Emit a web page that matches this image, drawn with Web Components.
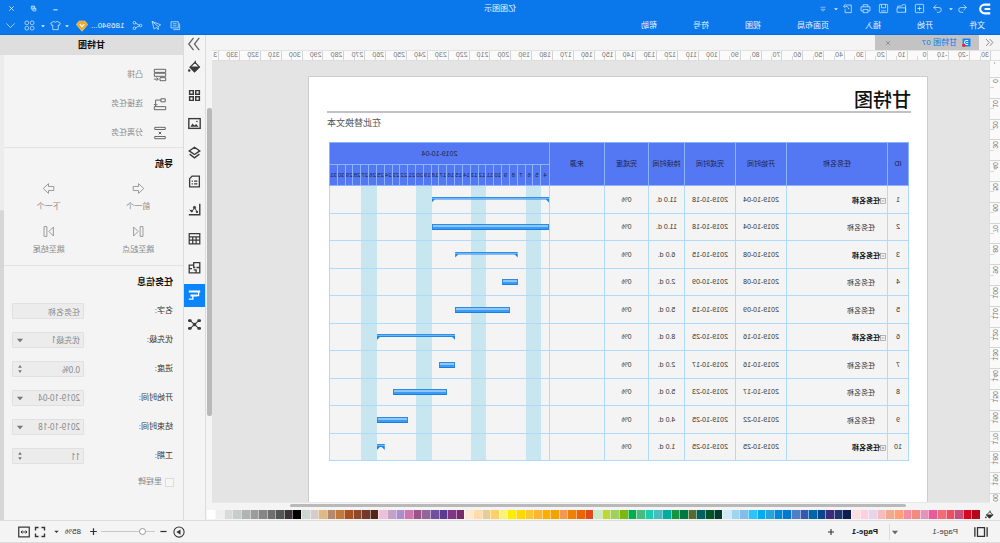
<!DOCTYPE html>
<html lang="zh-CN">
<head>
<meta charset="utf-8">
<title>亿图图示</title>
<style>
  html, body { margin: 0; height: 100%; overflow: hidden; background: #f4f4f4; }
  body { font: 8px/12px "Liberation Sans", "Noto Sans CJK SC", sans-serif; color: #333; }
</style>
</head>
<body>
<gantt-app></gantt-app>
<script>
const RESET = `
  *, *::before, *::after { box-sizing: border-box; }
  button { all: unset; box-sizing: border-box; display: inline-flex; align-items: center; justify-content: center; cursor: pointer; }
  a { color: inherit; text-decoration: none; }
  ui-icon { flex: none; }
`;

function component(name, css, html, setup) {
  customElements.define(name, class extends HTMLElement {
    connectedCallback() {
      if (this.shadowRoot) return;
      const root = this.attachShadow({ mode: 'open' });
      const body = typeof html === 'function' ? html(this) : html;
      root.innerHTML = `<style>${RESET}${css}</style>${body}`;
      if (setup) setup(this, root);
    }
  });
}

/* ---------- icons (16 x 16 grid, stroked with the current colour) ---------- */
const ICONS = {
  logo: '<path d="M2 3h6.500a5 5 0 0 1 0 10H2M2 8h6.500" stroke-width="2.400"/>',
  undo: '<path d="M6.500 2.500 2.500 6.500l4 4M2.500 6.500H10a3.500 3.500 0 0 1 0 7H7"/>',
  redo: '<path d="M9.500 2.500l4 4-4 4M13.500 6.500H6a3.500 3.500 0 0 0 0 7h3"/>',
  add: '<rect x="2" y="2" width="12" height="12" rx="1"/><path d="M8 5v6M5 8h6"/>',
  open: '<path d="M2 13.500V3.500q0-1 1-1h3.500l1.500 2h5.500V7M2 13.500V7H14.500v6.500z"/>',
  save: '<rect x="2" y="2" width="12" height="12" rx="1"/><path d="M5 2v5h6V2M4.500 11.500h7"/>',
  print: '<path d="M4.500 5.500V2.500h7v3M4.500 11.500h-3v-6h13v6h-3M4.500 9.500h7v4.500h-7z"/>',
  export: '<path d="M10 3H2.500v11h9V9M6 9c.500-3 3-4.500 7-4.500M10.500 1.500l3.500 3-3 3"/>',
  caret: '<path d="M3 6h10L8 11.500z" fill="currentColor" stroke="none"/>',
  more: '<path d="M3 4.500h10M4 8.500h8L8 12.500z"/>',
  min: '<path d="M3 11h10" stroke-width="2.200"/>',
  restore: '<path d="M2.500 7.500h7v6h-7zM5.500 7V2.500h7.500v7H10M2.500 9h7M5.500 4.500H13" stroke-width="1.500"/>',
  close: '<path d="M3 3l10 10M13 3 3 13" stroke-width="1.800"/>',
  notes: '<path d="M2 5v9h9M4 2.500h10.500v9H4zM6.500 5.500H12M6.500 8.500H12"/>',
  send: '<path d="M14.500 2 2 7l3.500 2.500V14l2.500-3 3.500 2zM14 2.500l-8.500 7"/>',
  share: '<circle cx="12.500" cy="4" r="1.900"/><circle cx="3.500" cy="8" r="1.900"/><circle cx="12.500" cy="12" r="1.900"/><path d="M5 7.500 11 4.500M5 8.500l6 3"/>',
  gem: '<path d="M4 1.500h8l3.500 4.500L8 15 .500 6z" fill="#f5a623" stroke="#ffcf70"/><path d="M5 5.500l3 3.500 3-3.500" stroke="#fff" stroke-width="1.800"/>',
  shirt: '<path d="M5.500 2 1 4.500 2.500 8 4 7.300V14h8V7.300L13.500 8 15 4.500 10.500 2Q8 4.500 5.500 2z"/>',
  apps: '<rect x="1.500" y="1.500" width="5.200" height="5.200" rx="2"/><rect x="9.300" y="1.500" width="5.200" height="5.200" rx="2"/><rect x="1.500" y="9.300" width="5.200" height="5.200" rx="2"/><rect x="9.300" y="9.300" width="5.200" height="5.200" rx="2"/>',
  down: '<path d="M2 5l6 6 6-6"/>',
  dleft: '<path d="M7.500 2 2 8l5.500 6M14 2 8.500 8l5.500 6" stroke-width="1.500"/>',
  dright: '<path d="M2 1l5.500 7L2 15M8.500 1 14 8l-5.500 7" stroke-width="1.500"/>',
  doc: '<rect x="1" y="1" width="14" height="14" fill="#0a84ff" stroke="none"/><path d="M5 4.500h3a3.500 3.500 0 0 1 0 7H5M5 8h3.500" stroke="#fff" stroke-width="1.800"/><circle cx="13" cy="13" r="3" fill="#f22" stroke="none"/>',
  fill: '<path d="M7 1v4M2 8.500 7.500 3l6 6L8 14.500z" stroke-width="1.500"/><path d="M2 8.500h11.500L8 14.500z" fill="currentColor"/><circle cx="14.500" cy="13" r="1.500" fill="currentColor" stroke="none"/>',
  blocks: '<path d="M2 2h4.500v4.500H2zM9.500 2H14v4.500H9.500zM2 9.500h4.500V14H2zM9.500 9.500H14V14H9.500z" stroke-width="1.800"/>',
  image: '<rect x="1" y="2" width="14" height="12" stroke-width="1.700"/><path d="M3 12l3-3.500 2 2 2.500-2.500L13 12z" fill="currentColor" stroke="none"/><circle cx="5" cy="5.500" r="1" fill="currentColor" stroke="none"/>',
  layers: '<path d="M8 1.500 1.500 6 8 10.500 14.500 6zM2 10l6 4.500 6-4.500" stroke-width="1.700"/>',
  page: '<path d="M2 1.500h9l3 3v10H2zM4.500 7.500h4M10 7.500h1.500M4.500 11h4M10 11h1.500" stroke-width="1.600"/>',
  chart: '<path d="M1.500 1v13.500H15" stroke-width="1.700"/><path d="M4.500 11.500 8 5.500l3 5 3-2" stroke-width="1.200"/><circle cx="8" cy="5.500" r="1.400" fill="currentColor"/><circle cx="5" cy="11" r="1" fill="currentColor"/><circle cx="11.500" cy="10" r="1" fill="currentColor"/>',
  table: '<path d="M1.500 2h13v12.500h-13zM1.500 6h13M1.500 10h13M6 6v8.500M10.200 6v8.500" stroke-width="1.500"/>',
  plan: '<path d="M1.500 2H9v3h5.500v9.500h-13zM1.500 8h4M9 5v3H7M6 14v-3h3M11 9.500h3.500" stroke-width="1.600"/>',
  gantt: '<path d="M1 3h14M5 8h8" stroke-width="2.400"/><path d="M3 3v5h3M10 8.500v4h5" stroke-width="1.600"/>',
  network: '<path d="M3 3.500 13 12.500M13 3.500 3 12.500" stroke-width="1.300"/><g fill="currentColor" stroke="none"><rect x="6" y="6" width="4" height="4"/><rect x="0" y="1.500" width="4.500" height="3.500" rx="1.500"/><rect x="11.500" y="1.500" width="4.500" height="3.500" rx="1.500"/><rect x="0" y="11" width="4.500" height="3.500" rx="1.500"/><rect x="11.500" y="11" width="4.500" height="3.500" rx="1.500"/></g>',
  outdent: '<path d="M1.500 1.500h13v3.500h-13zM1.500 6h13v3.500h-13zM1.500 11h6.500v3.500H1.500z"/><path d="M15 12.700h-5M12 10.700l-2 2 2 2"/>',
  link: '<path d="M2 2h5v3.500H2zM1.500 11h13v3.500h-13zM7 3.500h6V10M11 8l2 2 2-2"/>',
  split: '<path d="M2 1.500h12V4H2zM2 12h12v2.500H2zM6.500 6.500l3 3M9.500 6.500l-3 3"/>',
  prev: '<path d="M1.500 8 8 2v3.500h6.500v5H8V14z"/>',
  next: '<path d="M14.500 8 8 2v3.500H1.500v5H8V14z"/>',
  first: '<path d="M2.500 2H6v12H2.500zM14 2.500v11L8.500 8z"/>',
  last: '<path d="M13.500 2H10v12h3.500zM2 2.500v11L7.500 8z"/>',
  spin: '<path d="M5 6 8 1.500 11 6zM5 10 8 14.500 11 10z" fill="currentColor" stroke="none"/>',
  pages: '<path d="M4 3h8v10H4zM1 2.500v11M15 2.500v11" stroke-width="1.500"/>',
  play: '<circle cx="8" cy="8" r="6.800" stroke-width="1.400"/><path d="M6 4.500 11.500 8 6 11.500z" fill="currentColor" stroke="none"/>',
  minus: '<path d="M2.500 8h11" stroke-width="2.200"/>',
  plus: '<path d="M8 2v12M2 8h12" stroke-width="2.200"/>',
  full: '<path d="M2 6V2h4M10 2h4v4M14 10v4h-4M6 14H2v-4" stroke-width="1.800"/>',
  fit: '<rect x="1" y="1.500" width="14" height="13" stroke-width="1.600"/><path d="M4 8h8M6 6 4 8l2 2M10 6l2 2-2 2" stroke-width="1.300"/>',
  collapse: '<rect x="1.500" y="1.500" width="13" height="13" stroke-width="1.600"/><path d="M4.500 8h7" stroke-width="1.800"/>',
  expand: '<rect x="1.500" y="1.500" width="13" height="13" stroke-width="1.600"/><path d="M4.500 8h7M8 4.500v7" stroke-width="1.800"/>'
};
component('ui-icon', `
  :host { display: inline-block; width: var(--s, 10px); height: var(--s, 10px); }
  svg { display: block; width: 100%; height: 100%; fill: none; stroke: currentColor; }
`, el => `<svg viewBox="0 0 16 16" aria-hidden="true">${ICONS[el.getAttribute('name')]}</svg>`);

/* ---------- title bar and menus ---------- */
component('app-header', `
  :host { display: block; height: 35px; background: #0a78eb; border-bottom: 1px solid #0a6ad4; color: #eaf4ff; }
  .bar { display: grid; grid-template-columns: 1fr auto 1fr; align-items: center; height: 17px; }
  .quick { display: flex; align-items: center; padding-left: 6px; --s: 11px; }
  .quick button { width: 18px; height: 16px; }
  .quick button.slim { width: 10px; --s: 6px; margin: 0 -3px 0 -2px; }
  .quick .logo { --s: 14px; color: #fff; margin-right: 4px; }
  .quick button.menu { --s: 8px; width: 12px; margin-left: 5px; }
  .quick .after { margin-left: 2px; }
  .win { display: flex; justify-content: flex-end; padding-right: 1px; --s: 7px; }
  .win button { width: 22px; height: 16px; }
  .row { display: flex; justify-content: space-between; align-items: center; height: 17px; }
  nav { display: flex; gap: 36px; padding-left: 15px; }
  .user { display: flex; align-items: center; padding-right: 1px; --s: 11px; }
  .user button { width: 19px; height: 16px; }
  .user button.slim { width: 9px; --s: 6px; }
  .user button.shirt { width: 15px; }
  .user .gem { margin-right: 3px; }
  .name { margin: 0 2px 0 4px; }
  .user button.gem { width: 14px; --s: 12px; }
`, `
  <div class="bar">
    <div class="quick">
      <button class="logo" aria-label="首页"><ui-icon name="logo"></ui-icon></button>
      <button aria-label="撤销"><ui-icon name="undo"></ui-icon></button>
      <button class="slim" aria-label="撤销列表"><ui-icon name="caret"></ui-icon></button>
      <button class="after" aria-label="重做"><ui-icon name="redo"></ui-icon></button>
      <button aria-label="新建"><ui-icon name="add"></ui-icon></button>
      <button aria-label="打开"><ui-icon name="open"></ui-icon></button>
      <button aria-label="保存"><ui-icon name="save"></ui-icon></button>
      <button aria-label="打印"><ui-icon name="print"></ui-icon></button>
      <button aria-label="导出"><ui-icon name="export"></ui-icon></button>
      <button class="slim" aria-label="导出列表"><ui-icon name="caret"></ui-icon></button>
      <button class="menu" aria-label="更多"><ui-icon name="more"></ui-icon></button>
    </div>
    <div>亿图图示</div>
    <div class="win">
      <button aria-label="最小化"><ui-icon name="min"></ui-icon></button>
      <button aria-label="还原"><ui-icon name="restore"></ui-icon></button>
      <button aria-label="关闭"><ui-icon name="close"></ui-icon></button>
    </div>
  </div>
  <div class="row">
    <nav><a href="#file">文件</a><a href="#home">开始</a><a href="#insert">插入</a><a href="#layout">页面布局</a><a href="#view">视图</a><a href="#symbol">符号</a><a href="#help">帮助</a></nav>
    <div class="user">
      <button aria-label="评论"><ui-icon name="notes"></ui-icon></button>
      <button aria-label="发送"><ui-icon name="send"></ui-icon></button>
      <button aria-label="分享"><ui-icon name="share"></ui-icon></button>
      <span class="name">186940...</span>
      <button class="gem" aria-label="会员"><ui-icon name="gem"></ui-icon></button>
      <button class="slim" aria-label="会员列表"><ui-icon name="caret"></ui-icon></button>
      <button class="shirt" aria-label="主题"><ui-icon name="shirt"></ui-icon></button>
      <button class="slim" aria-label="主题列表"><ui-icon name="caret"></ui-icon></button>
      <button aria-label="应用"><ui-icon name="apps"></ui-icon></button>
      <button aria-label="收起"><ui-icon name="down"></ui-icon></button>
    </div>
  </div>
`);

component('doc-tabs', `
  :host { display: flex; height: 15px; background: #f4f4f4; color: #777; }
  .more { width: 21px; --s: 9px; }
  .tab { display: flex; align-items: center; width: 104px; padding: 0 10px 0 8px; background: #c3c3c3; --s: 9px; }
  .tab a { flex: 1; margin-left: 5px; color: #0a7df0; }
  .tab button { --s: 6px; }
`, `
  <button class="more" aria-label="标签列表"><ui-icon name="dleft"></ui-icon></button>
  <div class="tab"><ui-icon name="doc"></ui-icon><a href="#doc">甘特图 07</a><button aria-label="关闭标签"><ui-icon name="close"></ui-icon></button></div>
`);

/* ---------- rulers: each cell is ten millimetres ---------- */
component('ruler-x', `
  :host { display: flex; height: 11px; background: #fafafa; border-top: 1px solid #e2e2e2; border-bottom: 1px solid #dedede; overflow: hidden; font-size: 7px; line-height: 8px; color: #777; }
  span { flex: 1 1 0; min-width: 0; padding-left: 1px; border-left: 1px solid #d4d4d4; background: linear-gradient(#d8d8d8, #d8d8d8) 50% 100% / 1px 4px no-repeat; white-space: nowrap; }
  span:last-child { flex: 0 0 7px; background: none; }
`, () => Array.from({ length: 38 }, (_, i) => `<span>${i === 0 ? '30' : i === 37 ? '3' : i * 10 - 30}</span>`).join(''));

component('ruler-y', `
  :host { display: flex; flex-direction: column; background: #fafafa; border-right: 1px solid #dedede; overflow: hidden; font-size: 7px; line-height: 8px; color: #777; }
  div { flex: 1 1 0; min-height: 0; display: flex; align-items: flex-start; justify-content: center; padding-top: 1px; border-top: 1px solid #d4d4d4; background: linear-gradient(#d8d8d8, #d8d8d8) 100% 50% / 4px 1px no-repeat; }
  div:first-of-type { flex: 0 0 16px; border: 0; background: none; }
  div:last-of-type { flex: 0 0 9px; padding: 0; background: none; }
  span { writing-mode: vertical-rl; transform: rotate(180deg); }
`, () => `<div><span>-</span></div>` + Array.from({ length: 20 }, (_, i) => `<div><span>${i * 10}</span></div>`).join('') + '<div><span>00</span></div>');

/* ---------- gantt table ---------- */
const FIRST = 4, LAST = 31;
const TASKS = [
  ['1', 'open', '04', '18', '11.0 d.'],
  ['2', '', '04', '18', '11.0 d.'],
  ['3', 'open', '08', '15', '6.0 d.'],
  ['4', '', '08', '09', '2.0 d.'],
  ['5', '', '09', '15', '5.0 d.'],
  ['6', 'open', '16', '25', '8.0 d.'],
  ['7', '', '16', '17', '2.0 d.'],
  ['8', '', '17', '23', '5.0 d.'],
  ['9', '', '22', '25', '4.0 d.'],
  ['10', 'closed', '25', '25', '1.0 d.']
];
component('gantt-bar', `
  :host { display: block; align-self: center; grid-row: 1; z-index: 1; }
  div { height: 6px; border: 1px solid #2c8ce4; border-bottom-color: #1a7ee0; background: linear-gradient(#8cc6fa 50%, #3a9cf4 50%); }
  :host([summary]) div { border: 0; background: linear-gradient(#2f8ee6 1px, #6db6f8 1px 2px, #1f86ea 2px); clip-path: polygon(0 0, 100% 0, 100% 100%, calc(100% - 3px) 3px, 3px 3px, 0 100%); }
`, '<div></div>');

component('gantt-table', `
  :host { display: block; }
  table { width: 100%; border-collapse: collapse; table-layout: fixed; font-size: 7px; line-height: 10px; color: #333; }
  th, td { padding: 0; border: 1px solid #b0dafc; text-align: center; font-weight: normal; }
  th { height: 22px; background: #5478f4; border-color: #8cb4fa; color: #1c2444; }
  th.head { height: 21px; }
  td { background: #f4f4f4; }
  tbody tr { height: 27px; }
  tbody tr:nth-child(odd) { height: 28px; }
  .id { width: 21px; } .name { width: 101px; } .date { width: 51px; } .dur { width: 36px; } .done { width: 44px; } .src { width: 55px; }
  td.task { font: 7px/10px "Noto Sans CJK SC", sans-serif; text-align: left; padding-left: 12px; }
  td.group { font-weight: bold; color: #111; padding-left: 1px; }
  td.group button { --s: 6px; color: #888; vertical-align: middle; }
  .days { display: grid; grid-template-columns: repeat(${LAST - FIRST + 1}, 1fr); height: 26px; }
  tr:nth-child(odd) td .days { height: 27px; }
  th .days { height: 20px; font-size: 6px; line-height: 20px; }
  th .days span { min-width: 0; border-left: 1px solid #8cb4fa; display: flex; justify-content: center; white-space: nowrap; }
  th .days span:first-child { border-left: 0; }
  .off { grid-row: 1; background: #c8e6f0; }
`, () => {
  const days = Array.from({ length: LAST - FIRST + 1 }, (_, i) => `<span>${FIRST + i}</span>`).join('');
  const off = [5, 12, 19, 26].map(d => `<i class="off" style="grid-column:${d - FIRST + 1} / span 2"></i>`).join('');
  const rows = TASKS.map(([id, kind, from, to, dur]) => `
    <tr><td>${id}</td>
    <td class="task ${kind && 'group'}">${kind ? `<button aria-label="展开或收起"><ui-icon name="${kind === 'open' ? 'collapse' : 'expand'}"></ui-icon></button>` : ''}任务名称</td>
    <td>2019-10-${from}</td><td>2019-10-${to}</td><td>${dur}</td><td>0%</td><td></td>
    <td><div class="days">${off}<gantt-bar ${kind && 'summary'} style="grid-column:${from - FIRST + 1} / ${to - FIRST + 2}"></gantt-bar></div></td></tr>`).join('');
  return `<table>
    <colgroup><col class="id"><col class="name"><col class="date"><col class="date"><col class="dur"><col class="done"><col class="src"><col></colgroup>
    <thead>
      <tr><th rowspan="2">ID</th><th rowspan="2">任务名称</th><th rowspan="2">开始时间</th><th rowspan="2">完成时间</th><th rowspan="2">持续时间</th><th rowspan="2">完成度</th><th rowspan="2">来源</th><th>2019-10-04</th></tr>
      <tr><th class="head"><div class="days">${days}</div></th></tr>
    </thead>
    <tbody>${rows}</tbody></table>`;
});

component('drawing-page', `
  :host { display: block; margin: 15px 96px 0 61px; height: 100%; padding: 9px 18px 0; background: #fff; border: 1px solid #cdcdcd; }
  h1 { margin: 0 0 0 -2px; font: 500 19px/25px "Noto Sans CJK SC", sans-serif; color: #111; border-bottom: 2px solid #c2c0cc; }
  p { margin: 4px 0 13px; font-size: 9px; line-height: 12px; text-align: right; color: #555; }
  gantt-table { margin-right: 2px; }
`, `<h1>甘特图</h1><p>在此替换文本</p><gantt-table></gantt-table>`);

/* ---------- colour palette ---------- */
const COLORS = ('b5081a d8071f c8517b ea5061 ee6e73 e95c9b e196b8 f28b82 f48ca0 ffa07a f0aa90 f5bcc0 e8d4ea fdd0e0 fddde4 ' +
  '0b1d51 1f3470 3d2a78 08458c 0066a8 3459ae 4f7fc4 007ad0 0088d8 27a4dc 00aef0 2cc4fa 84bdea 9ed6f0 cdeaf6 ' +
  '003c2c 005426 006060 556b2f 007844 1a9440 00ada0 48bcc0 18cdb0 48bb80 00ae50 7ab90c a0d060 bcd838 cce8cc ' +
  'e2491a ec6400 f08000 f29850 f0a400 feae00 fdb532 fac832 ffd800 fdee00 fbf27c ffd068 e8cc96 ffdcaa fde8d0 ' +
  '782a6c 803684 5c3a90 71509c 94649c 9c5488 cc78b0 a98fd0 c4a2c8 ecc0da ' +
  '542414 733a2c 8a4a28 a8501f bf793a b4886c deb887 d4ccc8 ccd6cc ' +
  '000000 3c3436 555555 6f6f6f 868686 9c9c9c b0b4b2 c8ccca dadada efefef ffffff').split(' ');
component('color-palette', `
  :host { display: flex; align-items: center; height: 12px; background: #f4f4f4; color: #333; --s: 9px; }
  .pick { width: 20px; }
  .list { flex: 1; display: flex; height: 9px; margin-right: 1px; }
  .list button { flex: 1 1 0; min-width: 0; border-right: 1px solid rgba(255,255,255,.5); }
`, () => `<button class="pick" aria-label="填充"><ui-icon name="fill"></ui-icon></button><div class="list">${COLORS.map(c => `<button aria-label="#${c}" style="background:#${c}"></button>`).join('')}</div>`);

component('work-area', `
  :host { display: grid; grid-template-columns: 11px minmax(0, 1fr) 6px; grid-template-rows: 15px 11px minmax(0, 1fr) 6px 12px; min-width: 0; background: #f4f4f4; }
  doc-tabs, color-palette { grid-column: 1 / -1; }
  ruler-x { grid-column: 1 / 3; padding-left: 9px; }
  .canvas { background: #e4e4e4; overflow: hidden; }
  .vbar { grid-column: 3; grid-row: 2 / 5; display: flex; flex-direction: column; padding: 58px 1px 92px 0; }
  .hbar { grid-column: 2; grid-row: 4; display: flex; padding: 1px 78px 1px 83px; border-top: 1px solid #e8e8e8; }
  .vbar i, .hbar i { flex: 1; background: #b9b9b9; border-radius: 2px; }
`, `
  <doc-tabs></doc-tabs>
  <ruler-x></ruler-x>
  <ruler-y></ruler-y>
  <div class="canvas"><drawing-page></drawing-page></div>
  <div class="vbar"><i></i></div>
  <div class="hbar"><i></i></div>
  <color-palette></color-palette>
`);

/* ---------- tool strip ---------- */
const TOOLS = [['fill', '填充'], ['blocks', '符号库'], ['image', '图片'], ['layers', '图层'], ['page', '页面'], ['chart', '图表'], ['table', '表格'], ['plan', '平面图'], ['gantt', '甘特图'], ['network', '关系']];
component('tool-strip', `
  :host { display: block; width: 23px; background: #f4f4f4; border: solid #dcdcdc; border-width: 0 1px; color: #3a3a3a; --s: 13px; }
  .fold { width: 21px; height: 18px; color: #666; --s: 14px; }
  .tools { display: flex; flex-direction: column; justify-content: space-between; height: 281px; }
  .tools button { width: 21px; height: 23px; }
  .tools .on { background: #0a84ff; color: #fff; }
`, () => `<button class="fold" aria-label="折叠面板"><ui-icon name="dright"></ui-icon></button><div class="tools">${TOOLS.map(([n, t]) => `<button class="${n === 'gantt' ? 'on' : ''}" aria-label="${t}"><ui-icon name="${n}"></ui-icon></button>`).join('')}</div>`);

/* ---------- properties panel ---------- */
component('form-field', `
  :host { display: flex; align-items: center; height: 16px; }
  label { width: 89px; color: #333; }
  .box { flex: 1; position: relative; display: flex; min-width: 0; }
  input, select { flex: 1; min-width: 0; height: 16px; margin: 0; padding: 0 3px; border: 1px solid #e0e0e0; border-radius: 1px; background: #ececec; color: #888; font: 8px/12px "Noto Sans", "Noto Sans CJK SC", sans-serif; appearance: none; opacity: 1; }
  ui-icon { position: absolute; right: 3px; top: 3px; color: #777; --s: 10px; }
`, el => {
  const type = el.getAttribute('type'), value = el.getAttribute('value');
  const control = type === 'select' ? `<select id="c" disabled><option>${value}</option></select><ui-icon name="caret"></ui-icon>`
    : `<input id="c" type="text" value="${value}" disabled>${type === 'spin' ? '<ui-icon name="spin"></ui-icon>' : ''}`;
  return `<label for="c">${el.getAttribute('label')}</label><div class="box">${control}</div>`;
});

component('side-panel', `
  :host { display: grid; grid-template: 20px minmax(0, 1fr) / minmax(0, 1fr) 4px; width: 183px; background: #f4f4f4; }
  header { grid-column: 1 / -1; display: flex; align-items: center; justify-content: center; background: #dedede; font-size: 9px; font-weight: bold; color: #111; }
  .track { background: #ececec; padding-top: 155px; display: flex; }
  .track i { flex: 1; background: #d6d6d6; border-radius: 2px 2px 0 0; }
  section { border-bottom: 1px solid #e2e2e2; }
  section:last-child { border: 0; }
  .cmds { padding: 5px 0 0 16px; display: flex; flex-direction: column; color: #888; }
  .cmds button { height: 29px; justify-content: flex-start; gap: 10px; --s: 14px; }
  .cmds ui-icon { color: #555; }
  h2 { margin: 0; padding-left: 10px; font-size: 9px; line-height: 32px; color: #111; }
  .nav { display: grid; grid-template-columns: 1fr 1fr; gap: 7px 0; padding-bottom: 6px; color: #888; --s: 13px; }
  .nav button { flex-direction: column; }
  .nav ui-icon { margin: 2px 0 3px; }
  .nav span { line-height: 18px; }
  form { display: flex; flex-direction: column; gap: 13px; padding: 5px 8px 0 10px; }
  .check { display: flex; align-items: center; gap: 3px; margin: 10px 0 0 9px; height: 16px; color: #888; }
  .check input { appearance: none; width: 9px; height: 9px; margin: 0; border: 1px solid #dcdcdc; background: #f6f6f6; }
`, `
  <header>甘特图</header>
  <div>
    <section class="cmds">
      <button><ui-icon name="outdent"></ui-icon>凸排</button>
      <button><ui-icon name="link"></ui-icon>连接任务</button>
      <button><ui-icon name="split"></ui-icon>分离任务</button>
    </section>
    <section>
      <h2>导航</h2>
      <div class="nav">
        <button><ui-icon name="prev"></ui-icon><span>前一个</span></button>
        <button><ui-icon name="next"></ui-icon><span>下一个</span></button>
        <button><ui-icon name="first"></ui-icon><span>跳至起点</span></button>
        <button><ui-icon name="last"></ui-icon><span>跳至结尾</span></button>
      </div>
    </section>
    <section>
      <h2>任务信息</h2>
      <form>
        <form-field label="名字:" value="任务名称"></form-field>
        <form-field label="优先级:" type="select" value="优先级1"></form-field>
        <form-field label="进度:" type="spin" value="0.0%"></form-field>
        <form-field label="开始时间:" type="select" value="2019-10-04"></form-field>
        <form-field label="结束时间:" type="select" value="2019-10-18"></form-field>
        <form-field label="工期:" type="spin" value="11"></form-field>
      </form>
      <label class="check"><input type="checkbox" disabled>里程碑</label>
    </section>
  </div>
  <div class="track"><i></i></div>
`);

/* ---------- status bar ---------- */
component('status-bar', `
  :host { display: flex; justify-content: space-between; align-items: center; height: 23px; background: #f4f4f4; border: solid #dcdcdc; border-width: 1px 0; color: #333; }
  div { display: flex; align-items: center; }
  .pages { padding-left: 12px; --s: 14px; }
  .sel { position: relative; margin-left: 12px; width: 73px; border-right: 1px solid #dcdcdc; height: 16px; }
  select { appearance: none; width: 100%; border: 0; margin: 0; padding: 0 4px; background: none; font: 8px/12px "Liberation Sans", sans-serif; color: #444; }
  .sel ui-icon { position: absolute; right: 0; top: 3px; --s: 10px; color: #666; }
  .pages a { margin: 0 17px 0 11px; font-weight: bold; color: #111; }
  .pages .new { --s: 8px; }
  .zoom { padding-right: 18px; --s: 12px; }
  .zoom .step { width: 16px; --s: 9px; }
  .zoom .play { margin-right: 2px; }
  input { appearance: none; width: 54px; height: 12px; margin: 0; background: linear-gradient(#c8c8c8, #c8c8c8) 50% 50% / 100% 1px no-repeat; }
  input::-webkit-slider-thumb { appearance: none; width: 7px; height: 7px; border: 1px solid #999; border-radius: 50%; background: #fff; }
  .zoom span { margin-left: 4px; }
  .zoom .slim { width: 17px; margin-right: 2px; --s: 7px; }
  .fullscreen { margin-right: 4px; }
`, `
  <div class="pages">
    <button aria-label="页面列表"><ui-icon name="pages"></ui-icon></button>
    <div class="sel"><select aria-label="当前页面"><option>Page-1</option></select><ui-icon name="caret"></ui-icon></div>
    <a href="#page-1">Page-1</a>
    <button class="new" aria-label="添加页面"><ui-icon name="plus"></ui-icon></button>
  </div>
  <div class="zoom">
    <button class="play" aria-label="演示"><ui-icon name="play"></ui-icon></button>
    <button class="step" aria-label="缩小"><ui-icon name="minus"></ui-icon></button>
    <input type="range" aria-label="缩放" min="0" max="100" value="20">
    <button class="step" aria-label="放大"><ui-icon name="plus"></ui-icon></button>
    <span>85%</span>
    <button class="slim" aria-label="缩放列表"><ui-icon name="caret"></ui-icon></button>
    <button class="fullscreen" aria-label="全屏"><ui-icon name="full"></ui-icon></button>
    <button aria-label="适应宽度"><ui-icon name="fit"></ui-icon></button>
  </div>
`);

/* The whole window is flipped left to right. */
component('gantt-app', `
  :host { display: flex; flex-direction: column; height: 100vh; transform: scaleX(-1); background: #f4f4f4; }
  main { flex: 1; display: flex; min-height: 0; }
  work-area { flex: 1; }
`, `
  <app-header></app-header>
  <main><work-area></work-area><tool-strip></tool-strip><side-panel></side-panel></main>
  <status-bar></status-bar>
`);
</script>
</body>
</html>
